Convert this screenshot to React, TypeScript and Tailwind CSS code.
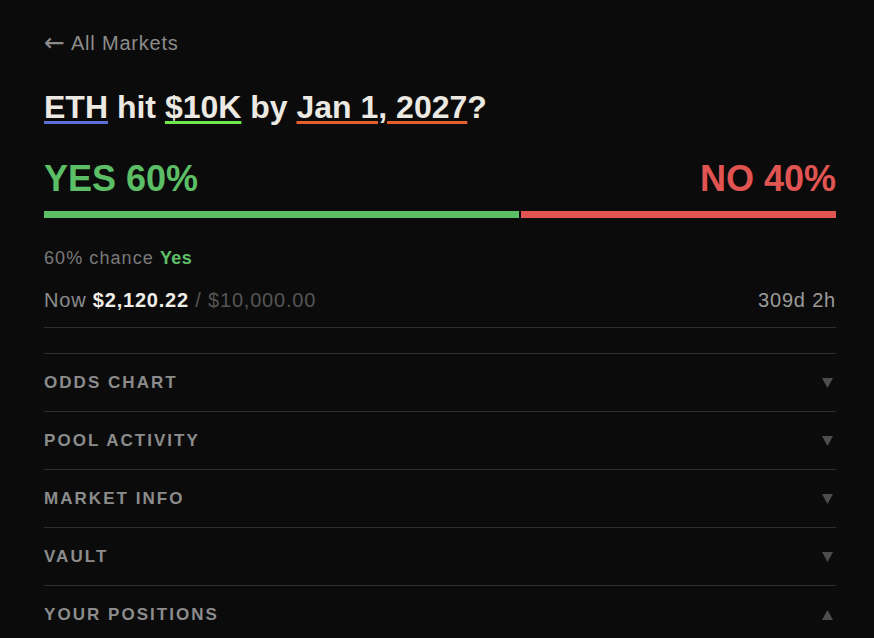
import React from 'react';

const sections = [
  { title: 'ODDS CHART', open: false },
  { title: 'POOL ACTIVITY', open: false },
  { title: 'MARKET INFO', open: false },
  { title: 'VAULT', open: false },
  { title: 'YOUR POSITIONS', open: true },
];

const Caret: React.FC<{ up?: boolean }> = ({ up }) => (
  <svg width="11" height="10" viewBox="0 0 11 10" className="mr-[3px]">
    {up ? <polygon points="5.5,0 11,10 0,10" fill="#4d4d4d" /> : <polygon points="0,0 11,0 5.5,10" fill="#4d4d4d" />}
  </svg>
);

export default function App() {
  const yes = 60;

  return (
    <div
      className="min-h-screen w-full bg-[#0b0b0b] text-[#ebe9e2]"
      style={{ fontFamily: '"Liberation Sans", Arial, Helvetica, sans-serif' }}
    >
      <div className="pl-[44px] pr-[38px] pt-[30px]">
        {/* Back link */}
        <a className="flex items-center text-[20px] leading-[26px] tracking-[0.04em] text-[#8c8c8c]">
          <span className="text-[25px] leading-[26px] tracking-normal" style={{ fontFamily: '"DejaVu Sans", sans-serif' }}>
            ←
          </span>
          <span className="ml-[6px]">All Markets</span>
        </a>

        {/* Title */}
        <h1 className="mt-[31px] text-[32px] leading-[40px] font-bold text-[#ebe9e2]">
          <span className="underline decoration-[#5b6fd6] decoration-[3px] underline-offset-[3px]">ETH</span> hit{' '}
          <span className="underline decoration-[#6ee84b] decoration-[3px] underline-offset-[3px]">$10K</span> by{' '}
          <span className="underline decoration-[#e35f2b] decoration-[3px] underline-offset-[3px]">Jan 1, 2027</span>?
        </h1>

        {/* Odds */}
        <div className="mt-[30px] flex items-center justify-between text-[36px] leading-[44px] font-bold">
          <span className="text-[#5cbf66]">YES {yes}%</span>
          <span className="text-[#e05451]">NO {100 - yes}%</span>
        </div>

        <div className="mt-[10px] flex h-[7px] gap-[2px]">
          <div className="bg-[#5cbf66]" style={{ width: `${yes}%` }} />
          <div className="flex-1 bg-[#e05451]" />
        </div>

        <div className="mt-[28px] text-[18px] leading-[24px] tracking-[0.06em] text-[#7a7a7a]">
          60% chance <span className="font-bold tracking-[0.02em] text-[#5cbf66]">Yes</span>
        </div>

        <div className="mt-[17px] flex items-center justify-between border-b border-[#2e2e2e] pb-[14px] text-[20px] leading-[26px] tracking-[0.04em]">
          <div className="text-[#8c8c8c]">
            Now <span className="font-bold text-[#f0eee8]">$2,120.22</span>{' '}
            <span className="text-[#555555]">/ $10,000.00</span>
          </div>
          <span className="text-[#9a9a9a]">309d 2h</span>
        </div>

        {/* Sections */}
        <div className="mt-[25px]">
          {sections.map(s => (
            <div
              key={s.title}
              className="flex h-[58px] items-center justify-between border-t border-[#2e2e2e]"
            >
              <span className="text-[17px] font-bold tracking-[0.12em] text-[#8c8c8c]">{s.title}</span>
              <Caret up={s.open} />
            </div>
          ))}
        </div>
      </div>
    </div>
  );
}
